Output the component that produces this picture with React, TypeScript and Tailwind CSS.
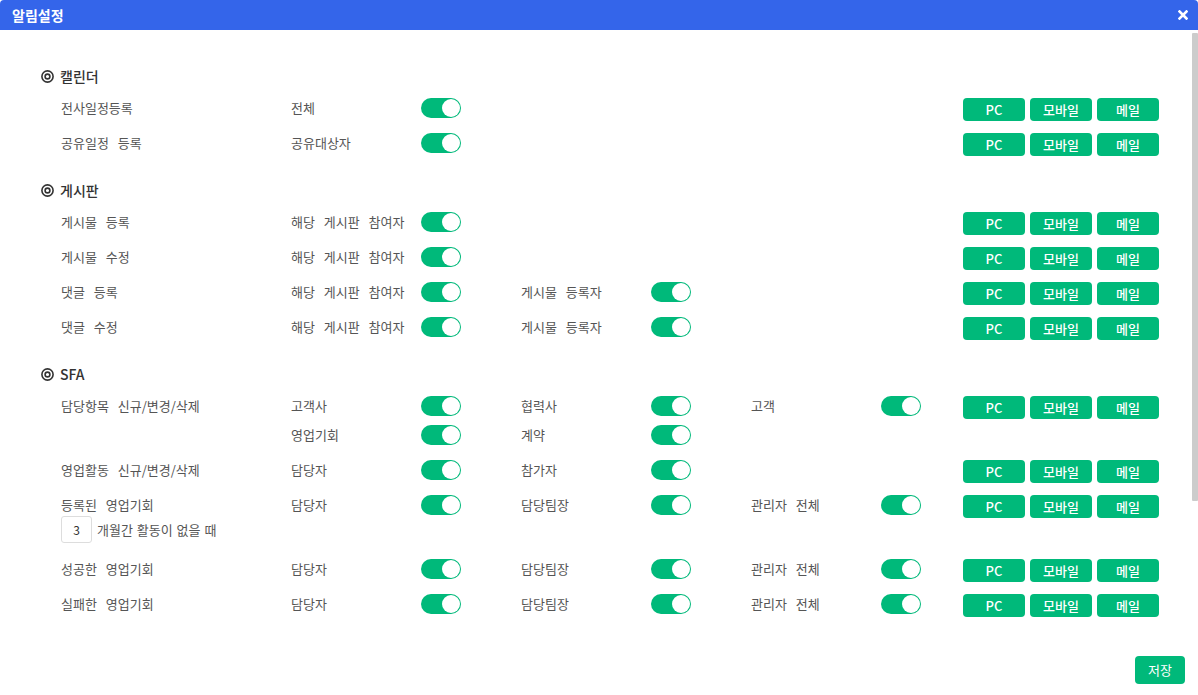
import React from 'react';

type Opt = { label: string } | null;

interface Row {
  label: string;
  lines: Opt[][];
  buttons?: boolean;
  months?: boolean;
}

interface Section {
  title: string;
  rows: Row[];
}

const o = (label: string): Opt => ({ label });

const sections: Section[] = [
  {
    title: '캘린더',
    rows: [
      { label: '전사일정등록', lines: [[o('전체')]], buttons: true },
      { label: '공유일정 등록', lines: [[o('공유대상자')]], buttons: true },
    ],
  },
  {
    title: '게시판',
    rows: [
      { label: '게시물 등록', lines: [[o('해당 게시판 참여자')]], buttons: true },
      { label: '게시물 수정', lines: [[o('해당 게시판 참여자')]], buttons: true },
      { label: '댓글 등록', lines: [[o('해당 게시판 참여자'), o('게시물 등록자')]], buttons: true },
      { label: '댓글 수정', lines: [[o('해당 게시판 참여자'), o('게시물 등록자')]], buttons: true },
    ],
  },
  {
    title: 'SFA',
    rows: [
      {
        label: '담당항목 신규/변경/삭제',
        lines: [
          [o('고객사'), o('협력사'), o('고객')],
          [o('영업기회'), o('계약')],
        ],
        buttons: true,
      },
      { label: '영업활동 신규/변경/삭제', lines: [[o('담당자'), o('참가자')]], buttons: true },
      {
        label: '등록된 영업기회',
        lines: [[o('담당자'), o('담당팀장'), o('관리자 전체')]],
        buttons: true,
        months: true,
      },
      { label: '성공한 영업기회', lines: [[o('담당자'), o('담당팀장'), o('관리자 전체')]], buttons: true },
      { label: '실패한 영업기회', lines: [[o('담당자'), o('담당팀장'), o('관리자 전체')]], buttons: true },
    ],
  },
];

function Toggle() {
  return (
    <div className="w-[40px] h-[20px] rounded-full bg-[#00b97a] flex items-center justify-end p-[1px]">
      <div className="w-[18px] h-[18px] rounded-full bg-white" />
    </div>
  );
}

function TargetIcon() {
  return (
    <svg width="13" height="13" viewBox="0 0 13 13" fill="none">
      <circle cx="6.5" cy="6.5" r="5.6" stroke="#333" strokeWidth="1.6" />
      <circle cx="6.5" cy="6.5" r="2.4" stroke="#333" strokeWidth="1.6" />
    </svg>
  );
}

function NotifyButtons() {
  return (
    <div className="ml-auto flex gap-[5px] pt-[5px]">
      {['PC', '모바일', '메일'].map((b) => (
        <button
          key={b}
          className="w-[62px] h-[23px] rounded-[4px] bg-[#00b97a] text-white text-[13px] font-medium leading-none flex items-center justify-center"
        >
          {b}
        </button>
      ))}
    </div>
  );
}

function SettingRow({ row }: { row: Row }) {
  return (
    <div className="flex items-start py-[3px] pl-[20px]">
      <div className="w-[230px] shrink-0">
        <div className="h-[29px] flex items-center">{row.label}</div>
        {row.months && (
          <div className="flex items-center gap-[5px] -mt-[3px] mb-[5px] h-[27px]">
            <div className="w-[31px] h-[27px] border border-[#dddddd] rounded-[3px] flex items-center justify-center text-[12px] text-[#333]">
              3
            </div>
            <span className="[word-spacing:1px]">개월간 활동이 없을 때</span>
          </div>
        )}
      </div>
      <div className="flex flex-col">
        {row.lines.map((line, i) => (
          <div key={i} className="flex h-[29px]">
            {line.map((opt, j) => (
              <div key={j} className={`${j < 2 ? 'w-[230px]' : 'w-[170px]'} flex items-center`}>
                {opt && (
                  <>
                    <span className="w-[130px] shrink-0">{opt.label}</span>
                    <Toggle />
                  </>
                )}
              </div>
            ))}
          </div>
        ))}
      </div>
      {row.buttons && <NotifyButtons />}
    </div>
  );
}

export default function App() {
  return (
    <div
      className="w-[1198px] h-[695px] bg-white flex flex-col text-[13px] text-[#555] [word-spacing:6px]"
      style={{ fontFamily: '"Noto Sans CJK KR", "Noto Sans", sans-serif' }}
    >
      <div className="h-[30px] shrink-0 bg-[#3465ea] rounded-t-[4px] flex items-center justify-between pl-[12px] pr-[10px]">
        <span className="text-white text-[14px] font-bold">알림설정</span>
        <svg width="10" height="10" viewBox="0 0 10 10">
          <path d="M1.5 1.5 L8.5 8.5 M8.5 1.5 L1.5 8.5" stroke="white" strokeWidth="2.6" strokeLinecap="square" />
        </svg>
      </div>

      <div className="flex h-[626px] shrink-0">
        <div className="flex-1 pl-[41px] pr-[32px] pt-[32px]">
          {sections.map((s, si) => (
            <div key={s.title} className={si > 0 ? 'mt-[16px]' : ''}>
              <div className="h-[28px] flex items-center gap-[6px] text-[14px] font-medium text-[#333]">
                <TargetIcon />
                <span>{s.title}</span>
              </div>
              {s.rows.map((r) => (
                <SettingRow key={r.label} row={r} />
              ))}
            </div>
          ))}
        </div>
        <div className="w-[7px] pt-[3px] pl-[1px]">
          <div className="w-[6px] h-[468px] bg-[#cccccc] rounded-[1px]" />
        </div>
      </div>

      <div className="flex justify-end pr-[13px]">
        <button className="w-[50px] h-[28px] rounded-[4px] bg-[#00b97a] text-white text-[13px] flex items-center justify-center">
          저장
        </button>
      </div>
    </div>
  );
}
